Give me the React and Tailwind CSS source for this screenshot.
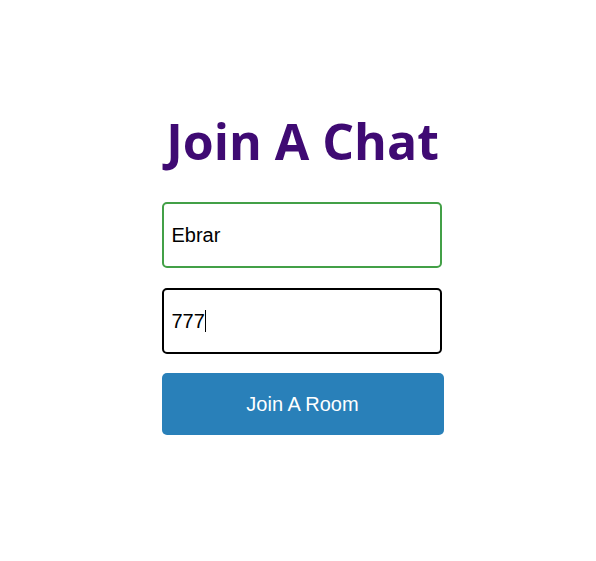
export default function App() {
  return (
    <div className="min-h-[561px] bg-white flex flex-col items-center pt-[104px] pl-[9px]">
      <h1 className="text-[50px] font-bold text-[#3f0a73] leading-normal" style={{ fontFamily: '"Open Sans", sans-serif' }}>
        Join A Chat
      </h1>
      <div className="mt-[23px] flex flex-col gap-[20px] w-[282px]" style={{ fontFamily: '"Liberation Sans", Arial, sans-serif' }}>
        <div className="w-[280px] h-[66px] border-2 border-[#43a047] rounded-[5px] flex items-center px-[8px] text-[20px] text-black">
          Ebrar
        </div>
        <div className="w-[280px] h-[66px] border-2 border-black rounded-[5px] flex items-center px-[8px] text-[20px] text-black">
          <span>777</span>
          <span className="inline-block w-px h-[22px] bg-black"></span>
        </div>
        <button className="w-[282px] h-[62px] rounded-[5px] bg-[#2980b9] text-white text-[20px] -mt-[1px]">
          Join A Room
        </button>
      </div>
    </div>
  );
}
